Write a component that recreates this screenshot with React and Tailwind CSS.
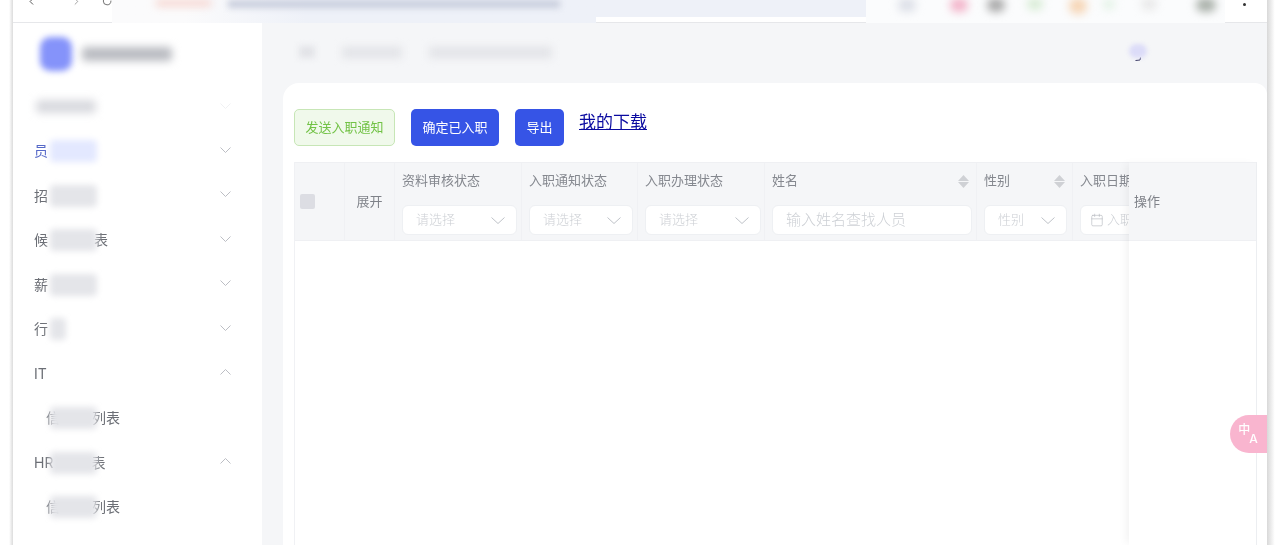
import React from "react";
import { ChevronLeft, ChevronRight, RotateCw, Calendar } from "lucide-react";

const FONT = "font-['Inter','Noto_Sans_CJK_SC',sans-serif]";

function Blur({ className = "", children }) {
  return <span className={`inline-block shrink-0 ${className}`}>{children}</span>;
}

function Chevron({ up, w = 11, h = 6, color = "#b4b7bd", className = "" }) {
  const pts = up ? `0.5,${h - 0.5} ${w / 2},0.5 ${w - 0.5},${h - 0.5}` : `0.5,0.5 ${w / 2},${h - 0.5} ${w - 0.5},0.5`;
  return (
    <svg width={w} height={h} viewBox={`0 0 ${w} ${h}`} className={`shrink-0 ${className}`}>
      <polyline points={pts} fill="none" stroke={color} strokeWidth="0.9" />
    </svg>
  );
}

function MenuItem({ lead, patch, tail, up, sub, active }) {
  return (
    <div className={`flex items-center justify-between shrink-0 pr-[31px] h-[44.5px] ${sub ? "pl-[33px]" : "pl-[21px]"}`}>
      <div className={`flex items-center text-[14px] leading-[20px] ${active ? "text-[#5568c8]" : "text-[#6b6e75]"}`}>
        <span className="shrink-0 whitespace-nowrap">{lead}</span>
        {patch && <Blur className={`relative z-10 h-[22px] rounded-sm blur-[3px] ${patch} ${active ? "bg-[#e3e8ff]" : "bg-[#e4e5e9]"}`} />}
        {tail && <span className="shrink-0 whitespace-nowrap">{tail}</span>}
      </div>
      {!sub && <Chevron up={up} className="mb-[3px]" />}
    </div>
  );
}

function Select({ text, className }) {
  return (
    <div className={`h-[30px] bg-white border border-[#eef0f3] rounded-[6px] flex items-center justify-between pl-[13px] pr-[11px] ${className}`}>
      <span className="text-[13px] text-[#cdd0d5] font-light">{text}</span>
      <Chevron w={14} h={7} color="#b8bbc2" />
    </div>
  );
}

function Sort() {
  return (
    <span className="flex flex-col gap-[1px]">
      <svg width="11" height="6" viewBox="0 0 11 6"><path d="M5.5 0 L11 6 H0 Z" fill="#cfd1d5" /></svg>
      <svg width="11" height="6" viewBox="0 0 11 6"><path d="M0 0 H11 L5.5 6 Z" fill="#cfd1d5" /></svg>
    </span>
  );
}

function Col({ width, title, sort, children }) {
  return (
    <div className={`${width} shrink-0 border-r border-[#f0f1f4] flex flex-col`}>
      <div className="h-[36px] flex items-center justify-between pl-[7px] pr-[7px] text-[13px] text-[#85888f] whitespace-nowrap">
        <span>{title}</span>
        {sort && <Sort />}
      </div>
      <div className="pt-[6px] pl-[7px] pr-[5px]">{children}</div>
    </div>
  );
}

export default function App() {
  return (
    <div className={`h-[545px] w-[1280px] overflow-hidden flex bg-white blur-[0.3px] ${FONT}`}>
      <div className="w-[13px] shrink-0 bg-gradient-to-r from-white from-[70%] to-[#dcdcdc]" />

      <div className="w-[1254px] shrink-0 flex flex-col relative">
        {/* browser bar */}
        <div className="h-[23px] shrink-0 flex bg-white overflow-hidden">
          <div className="w-[99px] shrink-0 overflow-hidden border-b border-[#e6e7ea]">
            <div className="flex items-start gap-[24px] pl-[12px] -mt-[7px] text-[#333]">
              <ChevronLeft size={17} strokeWidth={1.8} className="ml-[1px]" />
              <ChevronRight size={17} strokeWidth={1.3} className="ml-[10px] text-[#666]" />
              <RotateCw size={16} strokeWidth={1.6} className="-ml-[4px]" />
            </div>
          </div>
          <div className="w-[484px] shrink-0 h-[23px] bg-gradient-to-r from-[#fbfbfc] to-[#eef1f8] from-[15%] to-[40%] flex items-start">
            <Blur className="w-[55px] h-[6px] ml-[44px] bg-[#f6cfc8] blur-[4px]" />
            <Blur className="w-[332px] h-[8px] ml-[17px] bg-[#c9cedd] blur-[3px]" />
          </div>
          <div className="w-[270px] shrink-0 border-b border-[#e6e7ea]">
            <div className="h-[17px] bg-[#eef1f8]" />
          </div>
          <div className="w-[359px] shrink-0 flex items-start bg-[#fbfcfd] -mt-[2px] overflow-hidden">
            <Blur className="w-[18px] h-[14px] ml-[32px] rounded-full bg-[#dcdfe7] blur-[4px]" />
            <Blur className="w-[18px] h-[14px] ml-[34px] rounded-full bg-[#f3b3c9] blur-[4px]" />
            <Blur className="w-[18px] h-[14px] ml-[19px] rounded-full bg-[#a8a8a8] blur-[4px]" />
            <Blur className="w-[16px] h-[12px] ml-[22px] rounded-full bg-[#d7ecd4] blur-[4px]" />
            <Blur className="w-[18px] h-[16px] ml-[26px] rounded-full bg-[#f6d5b5] blur-[4px]" />
            <Blur className="w-[12px] h-[12px] ml-[16px] rounded-full bg-[#e3f3e6] blur-[4px]" />
            <Blur className="w-[16px] h-[12px] ml-[26px] rounded-full bg-[#e8e8e8] blur-[4px]" />
            <Blur className="w-[20px] h-[14px] ml-[39px] rounded-full bg-[#a9b0a9] blur-[4px]" />
          </div>
          <div className="flex-1 flex items-start border-b border-[#e6e7ea]">
            <span className="w-[3px] h-[3px] mt-[3px] ml-[18px] rounded-full bg-[#333] shrink-0" />
          </div>
        </div>

        <div className="flex-1 flex min-h-0">
          {/* sidebar */}
          <div className="w-[249px] shrink-0 bg-white flex flex-col overflow-hidden">
            <div className="h-[60px] shrink-0 flex items-center pl-[27px] pt-[2px]">
              <Blur className="w-[32px] h-[34px] rounded-[10px] bg-[#8593fa] blur-[3px]" />
              <Blur className="w-[90px] h-[14px] ml-[10px] bg-[#b9bbc1] blur-[4px] rounded" />
            </div>
            <div className="h-[46px] shrink-0 flex items-center justify-between pl-[23px] pr-[31px]">
              <Blur className="w-[60px] h-[13px] bg-[#d8d9de] blur-[4px] rounded" />
              <Chevron color="#eeeff2" />
            </div>
            <MenuItem lead="员" patch="w-[47px] ml-[2px]" active />
            <MenuItem lead="招" patch="w-[47px] ml-[2px]" />
            <MenuItem lead="候" patch="w-[47px] ml-[2px] -mr-[3px]" tail="表" />
            <MenuItem lead="薪" patch="w-[47px] ml-[2px]" />
            <MenuItem lead="行" patch="w-[16px] ml-[2px]" />
            <MenuItem lead="IT" up />
            <MenuItem lead="信" patch="w-[47px] -ml-[10px] -mr-[5px]" tail="列表" sub />
            <MenuItem lead="HR" patch="w-[47px] -ml-[3px] -mr-[6px]" tail="表" up />
            <MenuItem lead="信" patch="w-[47px] -ml-[10px] -mr-[5px]" tail="列表" sub />
          </div>

          {/* main */}
          <div className="flex-1 min-w-0 bg-[#f5f6f8] flex flex-col pl-[21px]">
            <div className="h-[60px] shrink-0 flex items-center pl-[16px] pr-[120px] justify-between">
              <div className="flex items-center gap-[27px] pb-[2px]">
                <Blur className="w-[16px] h-[12px] bg-[#e2e3e7] blur-[3px]" />
                <Blur className="w-[60px] h-[11px] bg-[#e2e3e7] blur-[4px]" />
                <Blur className="w-[123px] h-[11px] bg-[#e2e3e7] blur-[4px]" />
              </div>
              <div className="flex flex-col items-center mb-[2px]">
                <Blur className="w-[18px] h-[14px] rounded-full bg-[#dcdcf8] blur-[2px]" />
                <svg width="6" height="4" viewBox="0 0 6 4" className="-mt-[1px]"><path d="M0.5 3.5 L5 3 L5.5 0.5" fill="none" stroke="#2a2a55" strokeWidth="1" /></svg>
              </div>
            </div>

            <div className="flex-1 min-h-0 bg-white rounded-tl-[16px] rounded-tr-[12px] pt-[26px] pl-[11px] pr-[10px] flex flex-col">
              {/* toolbar */}
              <div className="flex items-start shrink-0 h-[53px]">
                <button className="h-[37px] w-[101px] rounded-[5px] bg-[#f0f9eb] border border-[#c7e6b6] text-[13px] text-[#72c246]">发送入职通知</button>
                <button className="h-[37px] w-[88px] ml-[16px] rounded-[5px] bg-[#3654e6] text-[13px] text-white">确定已入职</button>
                <button className="h-[37px] w-[49px] ml-[16px] rounded-[5px] bg-[#3654e6] text-[13px] text-white">导出</button>
                <a href="#" className="ml-[15px] mt-[1px] text-[17px] leading-[24px] text-[#0a0aa0] underline">我的下载</a>
              </div>

              {/* table */}
              <div className="flex-1 min-h-0 flex border-l border-[#f0f1f4]">
                <div className="flex-1 min-w-0 overflow-hidden">
                  <div className="h-[79px] flex bg-[#f5f6f8] border-y border-[#eff0f3]">
                    <div className="w-[50px] shrink-0 border-r border-[#f0f1f4] flex items-center pl-[5px]">
                      <span className="w-[15px] h-[15px] rounded-[2px] bg-[#dcdde3]" />
                    </div>
                    <div className="w-[50px] shrink-0 border-r border-[#f0f1f4] flex items-center justify-center text-[13px] text-[#7f8289]">展开</div>
                    <Col width="w-[127px]" title="资料审核状态"><Select text="请选择" className="w-[115px]" /></Col>
                    <Col width="w-[116px]" title="入职通知状态"><Select text="请选择" className="w-[104px]" /></Col>
                    <Col width="w-[127px]" title="入职办理状态"><Select text="请选择" className="w-[116px]" /></Col>
                    <Col width="w-[212px]" title="姓名" sort>
                      <div className="h-[30px] w-[200px] bg-white border border-[#eef0f3] rounded-[6px] flex items-center pl-[13px]">
                        <span className="text-[15px] text-[#cdd0d5] font-light">输入姓名查找人员</span>
                      </div>
                    </Col>
                    <Col width="w-[96px]" title="性别" sort><Select text="性别" className="w-[83px]" /></Col>
                    <Col width="w-[120px]" title="入职日期">
                      <div className="h-[30px] w-[110px] bg-white border border-[#eef0f3] rounded-[6px] flex items-center gap-[3px] pl-[9px] whitespace-nowrap">
                        <Calendar size={14} strokeWidth={1} className="text-[#b0b3ba] shrink-0" />
                        <span className="text-[13px] text-[#cdd0d5] font-light">入职日期</span>
                      </div>
                    </Col>
                  </div>
                </div>
                <div className="w-[128px] shrink-0 border-r border-[#eceef1] shadow-[-5px_0_8px_-2px_rgba(0,0,0,0.05)] z-10 bg-white">
                  <div className="h-[79px] bg-[#f5f6f8] border-y border-[#eff0f3] flex items-center pl-[5px] text-[13px] text-[#7f8289]">操作</div>
                </div>
              </div>
            </div>
          </div>
        </div>

        {/* floating translate button */}
        <div className="absolute right-0 top-[415px] z-20 w-[37px] h-[38px] rounded-l-full bg-[#f9b5cf] flex items-center justify-center text-white text-[12px] font-medium leading-none">
          <span className="flex items-stretch h-[21px] -ml-[1px]">
            <span className="self-start">中</span>
            <span className="self-end -ml-[1px]">A</span>
          </span>
        </div>
      </div>

      <div className="flex-1 bg-gradient-to-r from-[#d8d8d8] to-white to-[60%]" />
    </div>
  );
}
